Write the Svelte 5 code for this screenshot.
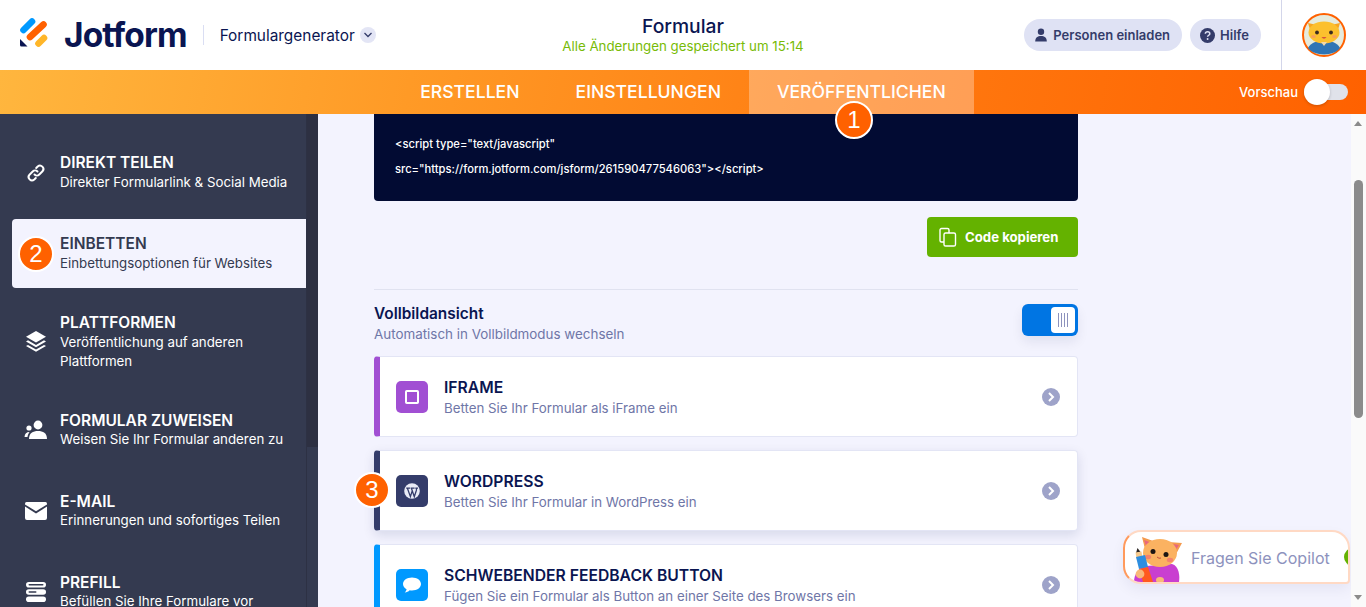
<script>
  const tabs = [
    { label: "ERSTELLEN" },
    { label: "EINSTELLUNGEN" },
    { label: "VERÖFFENTLICHEN", active: true }
  ];

  const menu = [
    { id: "link", title: "DIREKT TEILEN", sub: "Direkter Formularlink & Social Media" },
    { id: "embed", title: "EINBETTEN", sub: "Einbettungsoptionen für Websites", active: true },
    { id: "stack", title: "PLATTFORMEN", sub: "Veröffentlichung auf anderen Plattformen", tall: true },
    { id: "team", title: "FORMULAR ZUWEISEN", sub: "Weisen Sie Ihr Formular anderen zu" },
    { id: "mail", title: "E-MAIL", sub: "Erinnerungen und sofortiges Teilen" },
    { id: "prefill", title: "PREFILL", sub: "Befüllen Sie Ihre Formulare vor" }
  ];

  const cards = [
    { id: "iframe", title: "IFRAME", sub: "Betten Sie Ihr Formular als iFrame ein", color: "#a14fd3" },
    { id: "wp", title: "WORDPRESS", sub: "Betten Sie Ihr Formular in WordPress ein", color: "#343c6a", raised: true },
    { id: "chat", title: "SCHWEBENDER FEEDBACK BUTTON", sub: "Fügen Sie ein Formular als Button an einer Seite des Browsers ein", color: "#0099ff" }
  ];
</script>

<div class="page">
  <header class="topbar">
    <div class="brand">
      <svg class="logo" width="30" height="32" viewBox="0 0 30 32" aria-hidden="true">
        <path d="M4.5 13 L13 4.5" stroke="#0099ff" stroke-width="6.6" stroke-linecap="round" />
        <path d="M11 20 L24.5 7.5" stroke="#ff6100" stroke-width="6.6" stroke-linecap="round" />
        <path d="M19.5 26.5 L25 21" stroke="#ffb629" stroke-width="6.6" stroke-linecap="round" />
        <path d="M1 22 L8.5 29.5 H2.5 Q1 29.5 1 28 Z" fill="#0a1551" />
      </svg>
      <span class="wordmark">Jotform</span>
      <span class="brand-line"></span>
      <span class="product">Formulargenerator</span>
      <span class="chev">
        <svg width="10" height="6" viewBox="0 0 10 6"><path d="M1.5 1 L5 4.5 L8.5 1" fill="none" stroke="#343c6a" stroke-width="1.3" /></svg>
      </span>
    </div>

    <div class="form-state">
      <div class="form-name">Formular</div>
      <div class="saved">Alle Änderungen gespeichert um 15:14</div>
    </div>

    <div class="actions">
      <button class="pill">
        <svg width="14" height="14" viewBox="0 0 14 14"><circle cx="7" cy="3.8" r="3.2" fill="#343c6a" /><path d="M1.2 13.5 C1.2 9.6 3.6 8 7 8 C10.4 8 12.8 9.6 12.8 13.5 Z" fill="#343c6a" /></svg>
        Personen einladen
      </button>
      <button class="pill">
        <svg width="15" height="15" viewBox="0 0 15 15"><circle cx="7.5" cy="7.5" r="7.5" fill="#343c6a" /><path d="M5.3 5.8 C5.4 4.5 6.3 3.8 7.6 3.8 C8.9 3.8 9.8 4.6 9.8 5.7 C9.8 7.3 7.6 7.2 7.6 8.8" fill="none" stroke="#dfe2f4" stroke-width="1.5" /><circle cx="7.6" cy="11" r="0.95" fill="#dfe2f4" /></svg>
        Hilfe
      </button>
      <div class="avatar-box">
        <svg width="44" height="44" viewBox="0 0 44 44" aria-label="Avatar">
          <circle cx="22" cy="22" r="21" fill="#e6ebdd" stroke="#ff6100" stroke-width="2" />
          <path d="M6 35 C9 29 15 28 22 28 C29 28 35 29 38 35 C32 43.5 12 43.5 6 35 Z" fill="#2f75b5" />
          <path d="M6 10 L15 12 L9 20 Z M38 10 L29 12 L35 20 Z" fill="#f7a521" />
          <ellipse cx="22" cy="19.5" rx="15.5" ry="11" fill="#fcc02e" />
          <circle cx="15" cy="19.5" r="1.9" fill="#3a2a20" />
          <circle cx="29" cy="19.5" r="1.9" fill="#3a2a20" />
          <ellipse cx="11.5" cy="23.5" rx="2.4" ry="1.5" fill="#f9a05a" />
          <ellipse cx="32.5" cy="23.5" rx="2.4" ry="1.5" fill="#f9a05a" />
          <path d="M19.5 24 Q22 27.5 24.5 24 Z" fill="#d8503f" />
          <path d="M19 29 L22 33 L25 29 Z" fill="#f3d9a8" />
        </svg>
      </div>
    </div>
  </header>

  <nav class="tabbar">
    <div></div>
    <div class="tabs">
      {#each tabs as tab}
        <a class="tab" class:active={tab.active} href="#top">{tab.label}</a>
      {/each}
    </div>
    <div class="preview">
      <span>Vorschau</span>
      <span class="preview-track"><span class="preview-knob"></span></span>
    </div>
    <span class="step step-one">1</span>
  </nav>

  <div class="workspace">
    <aside class="sidebar">
      <div class="menu">
        {#each menu as item}
          <div class="menu-item" class:active={item.active} class:tall={item.tall}>
            <span class="menu-icon">
              {#if item.id === "link"}
                <svg width="22" height="22" viewBox="0 0 22 22" fill="none" stroke="#fff" stroke-width="2" stroke-linecap="round">
                  <path d="M9.5 12.5 a3.4 3.4 0 0 0 4.8 0 l3.2 -3.2 a3.4 3.4 0 0 0 -4.8 -4.8 l-1.5 1.5" />
                  <path d="M12.5 9.5 a3.4 3.4 0 0 0 -4.8 0 l-3.2 3.2 a3.4 3.4 0 0 0 4.8 4.8 l1.5 -1.5" />
                </svg>
              {:else if item.id === "embed"}
                <span class="step step-flat">2</span>
              {:else if item.id === "stack"}
                <svg width="22" height="24" viewBox="0 0 22 24" fill="#fff">
                  <path d="M11 1 L21 6.8 L11 12.6 L1 6.8 Z" />
                  <path d="M1 11.4 L3 10.3 L11 15 L19 10.3 L21 11.4 L11 17.2 Z" />
                  <path d="M1 16 L3 14.9 L11 19.6 L19 14.9 L21 16 L11 21.8 Z" />
                </svg>
              {:else if item.id === "team"}
                <svg width="24" height="20" viewBox="0 0 24 20" fill="#fff">
                  <circle cx="14" cy="5" r="4.4" />
                  <circle cx="5" cy="8" r="2.6" />
                  <path d="M5 19 C5 13 9 11 14 11 C19 11 23 13 23 19 Z" />
                  <path d="M0.5 17 C0.8 13.5 2.5 12 5.5 12 C4.5 13.5 3.8 15 3.5 17 Z" />
                </svg>
              {:else if item.id === "mail"}
                <svg width="22" height="18" viewBox="0 0 22 18" fill="#fff">
                  <path d="M1.5 0 H20.5 Q22 0 22 1.5 V2.4 L11 9.2 L0 2.4 V1.5 Q0 0 1.5 0 Z" />
                  <path d="M0 4.6 L11 11.4 L22 4.6 V16 Q22 18 20 18 H2 Q0 18 0 16 Z" />
                </svg>
              {:else}
                <svg width="22" height="22" viewBox="0 0 22 22" fill="#fff">
                  <rect x="1" y="1" width="20" height="5.6" rx="2.8" />
                  <rect x="1" y="8.2" width="20" height="5.6" rx="2.8" />
                  <rect x="1" y="15.4" width="20" height="5.6" rx="2.8" />
                  <rect x="3.5" y="3" width="15" height="1.6" rx="0.8" fill="#343a50" />
                  <rect x="3.5" y="10.2" width="8" height="1.6" rx="0.8" fill="#343a50" />
                </svg>
              {/if}
            </span>
            <span class="menu-text">
              <span class="menu-title">{item.title}</span>
              <span class="menu-sub">{item.sub}</span>
            </span>
          </div>
        {/each}
      </div>
      <div class="side-scroll"><span class="side-thumb"></span></div>
    </aside>

    <main class="content">
      <div class="column">
        <div class="code">
          <div>&lt;script type="text/javascript"</div>
          <div>src="https://form.jotform.com/jsform/261590477546063"&gt;&lt;/script&gt;</div>
        </div>

        <div class="copy-row">
          <button class="copy">
            <svg width="22" height="22" viewBox="0 0 22 22" fill="none" stroke="#fff" stroke-width="1.4">
              <path d="M7 16 H4.5 A1.5 1.5 0 0 1 3 14.5 V4 A1.5 1.5 0 0 1 4.5 2.5 H10.5 A1.5 1.5 0 0 1 12 4 V7" />
              <rect x="7" y="7" width="11.5" height="13" rx="1.6" />
            </svg>
            Code kopieren
          </button>
        </div>

        <div class="fullscreen">
          <div>
            <div class="fs-title">Vollbildansicht</div>
            <div class="fs-sub">Automatisch in Vollbildmodus wechseln</div>
          </div>
          <div class="switch">
            <span class="switch-knob"><i></i><i></i><i></i><i></i></span>
          </div>
        </div>

        <div class="cards">
          {#each cards as card}
            <div class="card" class:raised={card.raised} style="border-left-color: {card.color}">
              <span class="card-icon" style="background: {card.color}">
                {#if card.id === "iframe"}
                  <svg width="16" height="16" viewBox="0 0 16 16"><rect x="2" y="2" width="12" height="12" rx="0.8" fill="none" stroke="#fff" stroke-width="2" /></svg>
                {:else if card.id === "wp"}
                  <svg width="16" height="16" viewBox="0 0 16 16">
                    <circle cx="8" cy="8" r="7.8" fill="#e9ebf6" />
                    <path d="M2.2 5.2 H6 M6.6 5.2 H10.6 M11.3 5.2 H14 M3.4 5.2 L6.4 13.6 L8.2 8 M7.4 5.2 L10.3 13.6 L12.4 7.2 Q12.8 5.8 12 5" fill="none" stroke="#343c6a" stroke-width="1.3" />
                  </svg>
                {:else}
                  <svg width="20" height="18" viewBox="0 0 20 18"><path d="M10 1.5 C15 1.5 19 4.3 19 8 C19 11.7 15 14.5 10 14.5 C9.2 14.5 8.4 14.4 7.7 14.3 C6.4 15.6 4.6 16.4 2.8 16.6 C3.8 15.6 4.4 14.4 4.6 13.2 C2.4 12 1 10.1 1 8 C1 4.3 5 1.5 10 1.5 Z" fill="#fff" /></svg>
                {/if}
              </span>
              <span class="card-text">
                <span class="card-title">{card.title}</span>
                <span class="card-sub">{card.sub}</span>
              </span>
              <span class="card-arrow">
                <svg width="8" height="10" viewBox="0 0 8 10"><path d="M2 1 L6 5 L2 9" fill="none" stroke="#fff" stroke-width="2" /></svg>
              </span>
              {#if card.raised}
                <span class="step step-three">3</span>
              {/if}
            </div>
          {/each}
        </div>
      </div>

      <div class="copilot">
        <svg class="copilot-cat" width="52" height="46" viewBox="0 0 52 46" aria-hidden="true">
          <path d="M2 46 C2 38 7 31 14 30 L40 28 C47 30 48 40 47 46 Z" fill="#c93fd0" />
          <path d="M13 13 L10 1 L24 6 Z M36 6 L50 7 L43 20 Z" fill="#f49a4e" />
          <path d="M14 10 L12 4 L20 7 Z M41 8 L47 9 L43 15 Z" fill="#e8677e" />
          <ellipse cx="28" cy="17" rx="17" ry="14" fill="#fbb261" />
          <circle cx="21" cy="15.5" r="2.5" fill="#1c1512" />
          <circle cx="34" cy="18.5" r="2.5" fill="#1c1512" />
          <ellipse cx="16" cy="21" rx="3.2" ry="2.2" fill="#f5826d" />
          <ellipse cx="38" cy="24" rx="3.2" ry="2.2" fill="#f5826d" />
          <path d="M25 21 Q27 23 29 22" fill="none" stroke="#c5503f" stroke-width="1" />
          <path d="M4 17 L5.5 12 L8.5 16 Z" fill="#2a2320" />
          <rect x="4" y="16" width="6" height="6" fill="#f6c98d" transform="rotate(-10 7 19)" />
          <path d="M4 21 L13 19 L16 31 L7 33 Z" fill="#2e8ee0" />
          <path d="M7 33 L16 31 L21 46 L11 46 Z" fill="#ff5a1f" />
          <circle cx="8" cy="38" r="4.4" fill="#f9b878" />
          <ellipse cx="28" cy="44" rx="4" ry="3" fill="#f9b878" />
        </svg>
        <span class="copilot-label">Fragen Sie Copilot</span>
        <span class="copilot-dot"></span>
      </div>
    </main>

    <div class="page-scroll">
      <span class="arrow up"></span>
      <span class="page-thumb"></span>
      <span class="arrow down"></span>
    </div>
  </div>
</div>

<style>
  :global(body) {
    margin: 0;
    font-family: "Inter", "Liberation Sans", sans-serif;
    overflow: hidden;
  }

  .page {
    display: flex;
    flex-direction: column;
    height: 607px;
    overflow: hidden;
  }

  .topbar {
    display: grid;
    grid-template-columns: 1fr auto 1fr;
    align-items: center;
    height: 70px;
    background: #fff;
    flex: none;
  }

  .brand {
    display: flex;
    align-items: center;
    padding-left: 19px;
  }

  .logo {
    margin-top: -4px;
  }

  .wordmark {
    margin-left: 15px;
    font-size: 33.5px;
    font-weight: 700;
    letter-spacing: -0.9px;
    color: #0a1551;
  }

  .brand-line {
    width: 1px;
    height: 20px;
    margin: 0 16px;
    background: #dadef3;
  }

  .product {
    font-size: 15.4px;
    color: #0a1551;
  }

  .chev {
    display: flex;
    align-items: center;
    justify-content: center;
    width: 16px;
    height: 16px;
    margin-left: 5px;
    border-radius: 50%;
    background: #e3e5f5;
  }

  .form-state {
    text-align: center;
    margin-top: -2px;
  }

  .form-name {
    font-size: 19.3px;
    font-weight: 500;
    line-height: 24px;
    color: #0a1551;
  }

  .saved {
    font-size: 13.3px;
    line-height: 16px;
    color: #78bb07;
  }

  .actions {
    display: flex;
    align-items: center;
    justify-content: flex-end;
    gap: 8px;
    height: 70px;
  }

  .pill {
    display: flex;
    align-items: center;
    gap: 5px;
    height: 32px;
    padding: 0 12px 0 10px;
    border: 0;
    border-radius: 16px;
    background: #dfe2f4;
    color: #343c6a;
    font: 600 13px "Inter", sans-serif;
  }

  .avatar-box {
    display: flex;
    align-items: center;
    justify-content: center;
    width: 85px;
    height: 70px;
    margin-left: 12px;
    box-sizing: border-box;
    border-left: 1px solid #d3d6ea;
  }

  .tabbar {
    position: relative;
    display: grid;
    grid-template-columns: 1fr auto 1fr;
    height: 44px;
    flex: none;
    background: linear-gradient(100deg, #ffb63e 0%, #ff9a26 30%, #ff7a10 65%, #ff6100 100%);
  }

  .tabs {
    display: flex;
  }

  .tab {
    display: flex;
    align-items: center;
    padding: 0 28px 2px;
    color: #fff;
    font-size: 17.6px;
    font-weight: 500;
    text-decoration: none;
  }

  .tab.active {
    background: rgba(255, 255, 255, 0.3);
  }

  .preview {
    display: flex;
    align-items: center;
    justify-content: flex-end;
    gap: 6px;
    padding-right: 18px;
    color: #fff;
    font-size: 13px;
    font-weight: 500;
  }

  .preview-track {
    position: relative;
    width: 44px;
    height: 16px;
    border-radius: 8px;
    background: #e0e2ea;
  }

  .preview-knob {
    position: absolute;
    top: -5px;
    left: 0;
    width: 26px;
    height: 26px;
    border-radius: 50%;
    background: #fff;
    box-shadow: 0 1px 3px rgba(0, 0, 0, 0.2);
  }

  .step {
    display: flex;
    align-items: center;
    justify-content: center;
    box-sizing: border-box;
    width: 38px;
    height: 38px;
    border: 2px solid #fff;
    border-radius: 50%;
    background: #ff6100;
    color: #fff;
    font: 500 24px "Liberation Sans", sans-serif;
  }

  .step-one {
    position: absolute;
    left: 835px;
    top: 31px;
    z-index: 3;
  }

  .step-flat {
    flex: none;
    width: 36px;
    height: 36px;
  }

  .step-three {
    position: absolute;
    width: 36px;
    height: 36px;
    left: -26px;
    top: 21px;
  }

  .workspace {
    display: flex;
    flex: 1;
    min-height: 0;
  }

  .sidebar {
    display: flex;
    width: 318px;
    flex: none;
    background: #343a50;
    overflow: hidden;
  }

  .menu {
    flex: 1;
    min-width: 0;
    padding: 24px 0 0 12px;
    display: flex;
    flex-direction: column;
    gap: 12px;
  }

  .menu-item {
    display: flex;
    align-items: center;
    gap: 12px;
    min-height: 69px;
    box-sizing: border-box;
    padding: 15px 0 15px 12px;
    border-radius: 4px 0 0 4px;
    color: #fff;
    flex: none;
  }

  .menu-item.active {
    background: #f3f3fe;
    color: #343a50;
  }

  .menu-item.tall {
    padding: 13px 0 13px 12px;
  }

  .menu-icon {
    display: flex;
    align-items: center;
    justify-content: center;
    width: 24px;
    height: 24px;
    flex: none;
  }

  .menu-text {
    display: flex;
    flex-direction: column;
    width: 236px;
  }

  .menu-title {
    font-size: 15.5px;
    font-weight: 600;
    line-height: 20px;
  }

  .menu-sub {
    font-size: 13.3px;
    line-height: 19px;
    margin-top: -0.5px;
  }

  .side-scroll {
    width: 12px;
    flex: none;
    background: #343a50;
    border-left: 1px solid #2d3144;
    box-sizing: border-box;
  }

  .side-thumb {
    display: block;
    height: 333px;
    background: #2d3042;
  }

  .content {
    position: relative;
    flex: 1;
    min-width: 0;
    background: #f3f3fe;
    overflow: hidden;
  }

  .column {
    width: 704px;
    margin-left: 56px;
  }

  .code {
    box-sizing: border-box;
    height: 87px;
    padding: 18px 21px 0;
    border-radius: 0 0 4px 4px;
    background: #020b33;
    color: #fff;
    font-size: 11.2px;
    font-weight: 500;
    line-height: 24.5px;
  }

  .copy-row {
    display: flex;
    justify-content: flex-end;
    margin-top: 16px;
    padding-bottom: 32px;
    border-bottom: 1px solid #e0e2f0;
  }

  .copy {
    display: flex;
    align-items: center;
    gap: 6px;
    height: 40px;
    width: 151px;
    padding: 0 0 0 10px;
    border: 0;
    border-radius: 4px;
    background: #64b200;
    color: #fff;
    font: 700 13.2px "Inter", sans-serif;
  }

  .fullscreen {
    display: flex;
    justify-content: space-between;
    align-items: flex-start;
    box-sizing: border-box;
    height: 66px;
    padding-top: 13px;
  }

  .fs-title {
    font-size: 15.4px;
    font-weight: 600;
    line-height: 21px;
    color: #0a1551;
  }

  .fs-sub {
    font-size: 13.4px;
    line-height: 20px;
    color: #6f76a7;
  }

  .switch {
    display: flex;
    justify-content: flex-end;
    box-sizing: border-box;
    width: 56px;
    height: 32px;
    margin-top: 1px;
    padding: 3px;
    border-radius: 6px;
    background: #0075e3;
    box-shadow: 0 6px 12px rgba(10, 21, 81, 0.08);
  }

  .switch-knob {
    display: flex;
    align-items: center;
    justify-content: center;
    gap: 2px;
    width: 24px;
    height: 26px;
    border-radius: 4px;
    background: #fff;
  }

  .switch-knob i {
    width: 1px;
    height: 14px;
    background: #8d92bd;
  }

  .cards {
    display: flex;
    flex-direction: column;
    gap: 13px;
  }

  .card {
    position: relative;
    display: flex;
    align-items: center;
    box-sizing: border-box;
    height: 81px;
    padding: 0 17px 0 16px;
    border: 1px solid #e3e5f5;
    border-left: 6px solid;
    border-radius: 4px;
    background: #fff;
  }

  .card.raised {
    box-shadow: 0 4px 12px rgba(10, 21, 81, 0.12);
  }

  .card-icon {
    display: flex;
    align-items: center;
    justify-content: center;
    width: 32px;
    height: 32px;
    border-radius: 5px;
    flex: none;
  }

  .card-text {
    display: flex;
    flex-direction: column;
    flex: 1;
    margin-left: 16px;
    padding-top: 2px;
  }

  .card-title {
    font-size: 15.7px;
    font-weight: 600;
    line-height: 21px;
    color: #0a1551;
  }

  .card-sub {
    font-size: 13.3px;
    line-height: 21px;
    color: #6f76a7;
  }

  .card-arrow {
    display: flex;
    align-items: center;
    justify-content: center;
    width: 18px;
    height: 18px;
    border-radius: 50%;
    background: #9ea3c9;
    flex: none;
  }

  .copilot {
    position: absolute;
    left: 805px;
    top: 416px;
    display: flex;
    align-items: center;
    box-sizing: border-box;
    width: 227px;
    height: 54px;
    border: 2px solid #ffd9c4;
    border-left-color: #ff9a5c;
    border-radius: 18px 18px 4px 18px;
    background: #fff;
    box-shadow: 0 6px 14px rgba(10, 21, 81, 0.06);
    overflow: hidden;
  }

  .copilot-cat {
    position: absolute;
    left: 7px;
    bottom: 0;
  }

  .copilot-label {
    margin-left: 66px;
    padding-top: 1px;
    font-size: 16px;
    color: #8d92bd;
  }

  .copilot-dot {
    position: absolute;
    right: -14px;
    top: 16px;
    width: 18px;
    height: 18px;
    border-radius: 50%;
    background: #64b200;
  }

  .page-scroll {
    position: relative;
    width: 15px;
    flex: none;
    background: #fafafa;
  }

  .page-thumb {
    position: absolute;
    left: 3px;
    top: 66px;
    width: 9px;
    height: 238px;
    border-radius: 5px;
    background: #8b8b8b;
  }

  .arrow {
    position: absolute;
    left: 3px;
    width: 0;
    height: 0;
    border-left: 4.5px solid transparent;
    border-right: 4.5px solid transparent;
  }

  .arrow.up {
    top: 7px;
    border-bottom: 5px solid #8b8b8b;
  }

  .arrow.down {
    bottom: 7px;
    border-top: 5px solid #8b8b8b;
  }
</style>
